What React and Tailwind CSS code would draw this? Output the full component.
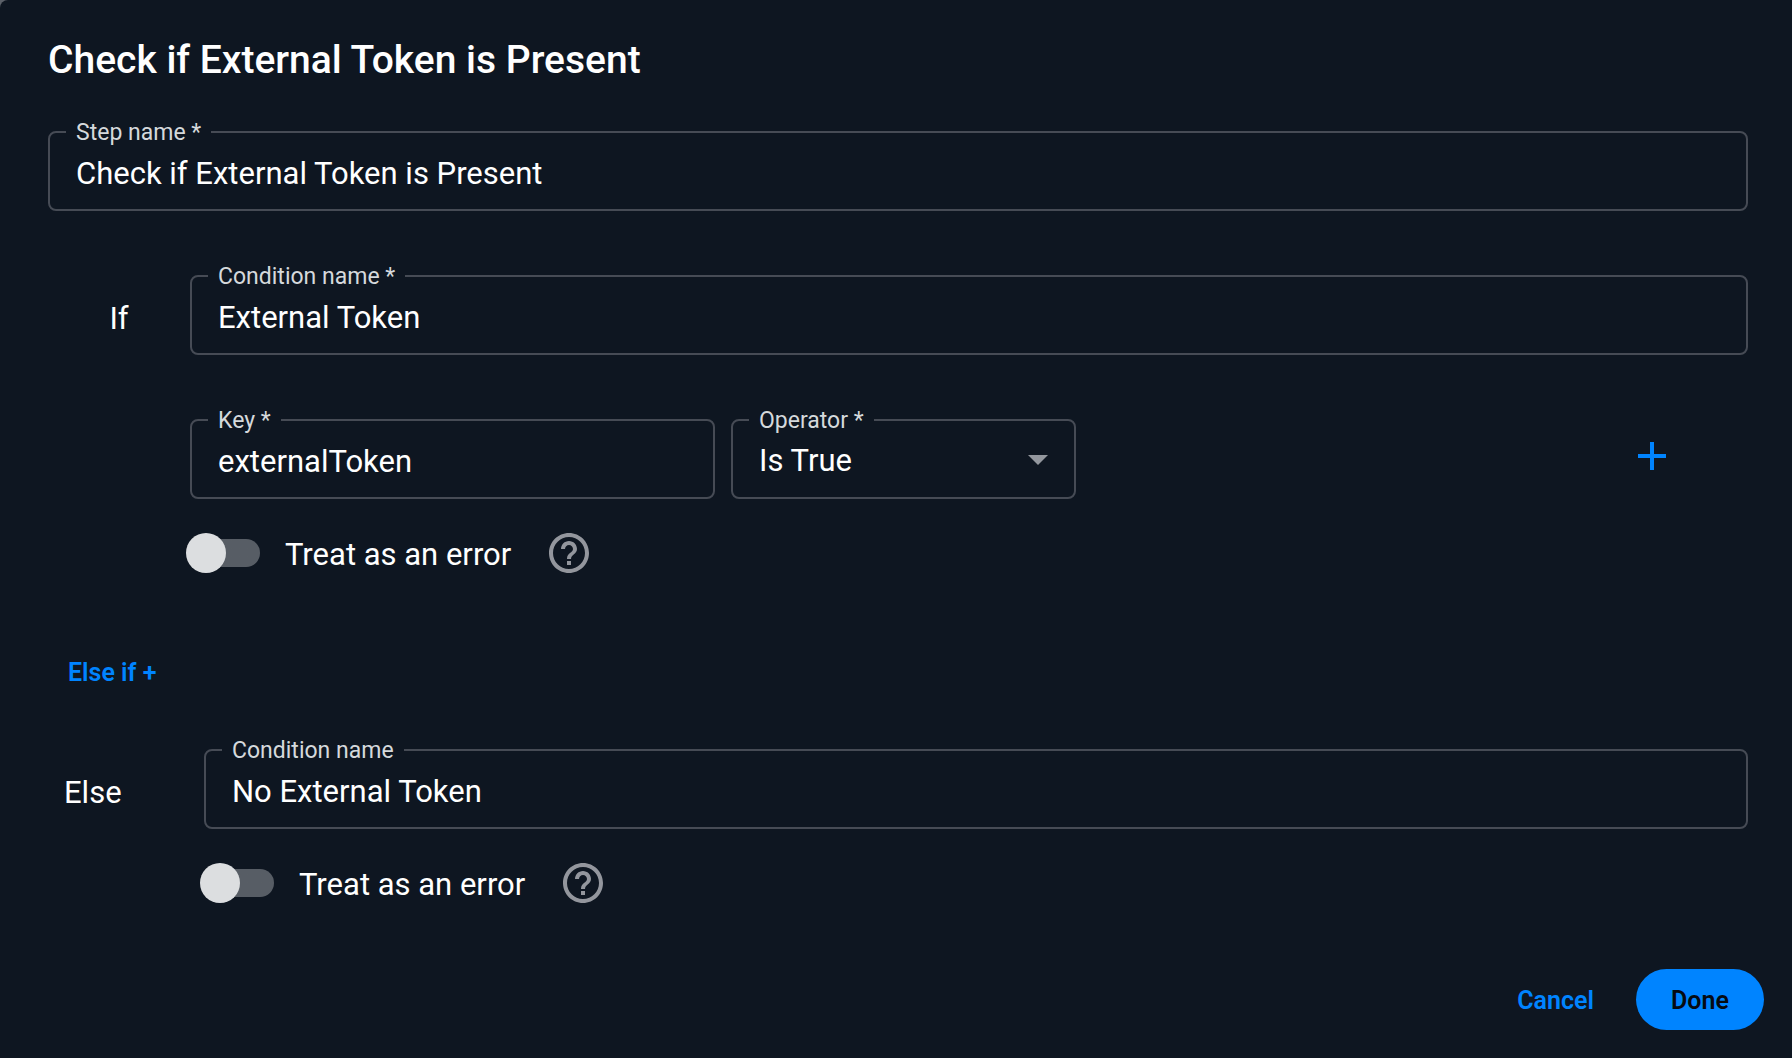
import React, { useState } from 'react';

const OPERATORS = ['Is True', 'Is False', 'Equals', 'Not Equals'];

// Outlined field: the label sits on top of the border
const Outlined = ({ id, label, className = '', children }) => (
  <div className={`relative min-w-0 ${className}`}>
    {children}
    <label
      htmlFor={id}
      className="absolute left-[18px] -top-3 px-[10px] bg-[#0e1621] text-[#d5d9dc] text-[23px] leading-7 whitespace-nowrap"
    >
      {label}
    </label>
  </div>
);

const TextField = ({ id, label, value, onChange, className }) => (
  <Outlined id={id} label={label} className={className}>
    <input
      id={id}
      type="text"
      value={value}
      onChange={(e) => onChange(e.target.value)}
      className="block w-full h-20 pt-1 px-[26px] rounded-lg border-2 border-[#464b55] bg-transparent text-white text-[31px] outline-none focus:border-[#0084ff]"
    />
  </Outlined>
);

const SelectField = ({ id, label, value, onChange, options, className }) => (
  <Outlined id={id} label={label} className={className}>
    <select
      id={id}
      value={value}
      onChange={(e) => onChange(e.target.value)}
      className="block w-full h-20 pt-1 pl-[26px] pr-16 rounded-lg border-2 border-[#464b55] bg-transparent text-white text-[31px] appearance-none outline-none focus:border-[#0084ff]"
    >
      {options.map((option) => (
        <option key={option} value={option} className="bg-[#0e1621]">
          {option}
        </option>
      ))}
    </select>
    <svg
      viewBox="0 0 20 10"
      className="absolute right-7 top-9 w-5 h-[10px] pointer-events-none"
      aria-hidden="true"
    >
      <path d="M0 0h20L10 10z" fill="#93979e" />
    </svg>
  </Outlined>
);

const HelpIcon = () => (
  <svg viewBox="2 2 20 20" className="w-10 h-10" fill="#93969d" aria-hidden="true">
    <path d="M11 18h2v-2h-2v2zm1-16C6.48 2 2 6.48 2 12s4.48 10 10 10 10-4.48 10-10S17.52 2 12 2zm0 18c-4.41 0-8-3.59-8-8s3.59-8 8-8 8 3.59 8 8-3.59 8-8 8zm0-14c-2.21 0-4 1.79-4 4h2c0-1.1.9-2 2-2s2 .9 2 2c0 2-3 1.75-3 5h2c0-2.25 3-2.5 3-5 0-2.21-1.79-4-4-4z" />
  </svg>
);

const ErrorToggle = ({ checked, onChange }) => (
  <div className="flex items-center gap-[38px] h-10 mt-[34px] -ml-1">
    <label className="flex items-center gap-[25px] cursor-pointer">
      <input
        type="checkbox"
        role="switch"
        checked={checked}
        onChange={(e) => onChange(e.target.checked)}
        className="peer sr-only"
      />
      <span className="flex items-center w-[74px] h-7 rounded-full bg-linear-to-r from-transparent from-10% to-[#575d65] to-10% peer-checked:justify-end peer-checked:to-[#0084ff]">
        <span className="w-10 h-10 rounded-full bg-[#dcdee0]" />
      </span>
      <span className="pt-1 text-white text-[31px] leading-10 whitespace-nowrap">Treat as an error</span>
    </label>
    <button type="button" aria-label="Help" className="cursor-pointer">
      <HelpIcon />
    </button>
  </div>
);

const App = () => {
  const [stepName, setStepName] = useState('Check if External Token is Present');
  const [ifName, setIfName] = useState('External Token');
  const [key, setKey] = useState('externalToken');
  const [operator, setOperator] = useState('Is True');
  const [ifError, setIfError] = useState(false);
  const [elseName, setElseName] = useState('No External Token');
  const [elseError, setElseError] = useState(false);

  return (
    <div className="min-h-screen flex bg-[#5b6068]">
      <form
        onSubmit={(e) => e.preventDefault()}
        className="flex-1 min-w-0 pt-9 pb-7 pl-12 pr-7 rounded-tl-lg bg-[#0e1621] font-['Roboto',sans-serif]"
      >
        <div className="pr-4">
          <h1 className="text-white text-[39px] leading-12 font-medium">Check if External Token is Present</h1>

          <TextField id="step-name" label="Step name *" value={stepName} onChange={setStepName} className="mt-[47px]" />

          {/* If */}
          <div className="flex mt-16">
            <div className="w-[142px] shrink-0 pt-1 text-center text-white text-[31px] leading-20">If</div>
            <div className="flex-1 min-w-0">
              <TextField id="if-name" label="Condition name *" value={ifName} onChange={setIfName} />
              <div className="flex gap-4 mt-16">
                <TextField id="if-key" label="Key *" value={key} onChange={setKey} className="flex-[525]" />
                <SelectField
                  id="if-operator"
                  label="Operator *"
                  value={operator}
                  onChange={setOperator}
                  options={OPERATORS}
                  className="flex-[345]"
                />
                <div className="flex-[656] flex items-center justify-end">
                  <button type="button" aria-label="Add condition" className="mr-[76px] pb-[6px] cursor-pointer">
                    <svg viewBox="0 0 40 40" className="w-10 h-10" fill="#0084ff" aria-hidden="true">
                      <path d="M18 6h4v12h12v4H22v12h-4V22H6v-4h12z" />
                    </svg>
                  </button>
                </div>
              </div>
              <ErrorToggle checked={ifError} onChange={setIfError} />
            </div>
          </div>

          <button
            type="button"
            className="block mt-[74px] ml-5 pt-[2px] text-[#0084ff] text-[25px] leading-12 font-semibold cursor-pointer"
          >
            Else if +
          </button>

          {/* Else */}
          <div className="flex mt-[52px]">
            <div className="w-[156px] shrink-0 pt-1 pl-4 text-white text-[31px] leading-20">Else</div>
            <div className="flex-1 min-w-0">
              <TextField id="else-name" label="Condition name" value={elseName} onChange={setElseName} />
              <ErrorToggle checked={elseError} onChange={setElseError} />
            </div>
          </div>
        </div>

        {/* Actions */}
        <div className="flex items-center justify-end gap-[42px] mt-[66px]">
          <button type="button" className="pt-[3px] text-[#0084ff] text-[25px] font-semibold cursor-pointer">
            Cancel
          </button>
          <button
            type="submit"
            className="w-32 h-[61px] pt-[3px] rounded-full bg-[#0084ff] text-[#060b12] text-[25px] font-semibold cursor-pointer"
          >
            Done
          </button>
        </div>
      </form>
    </div>
  );
};

export default App;
